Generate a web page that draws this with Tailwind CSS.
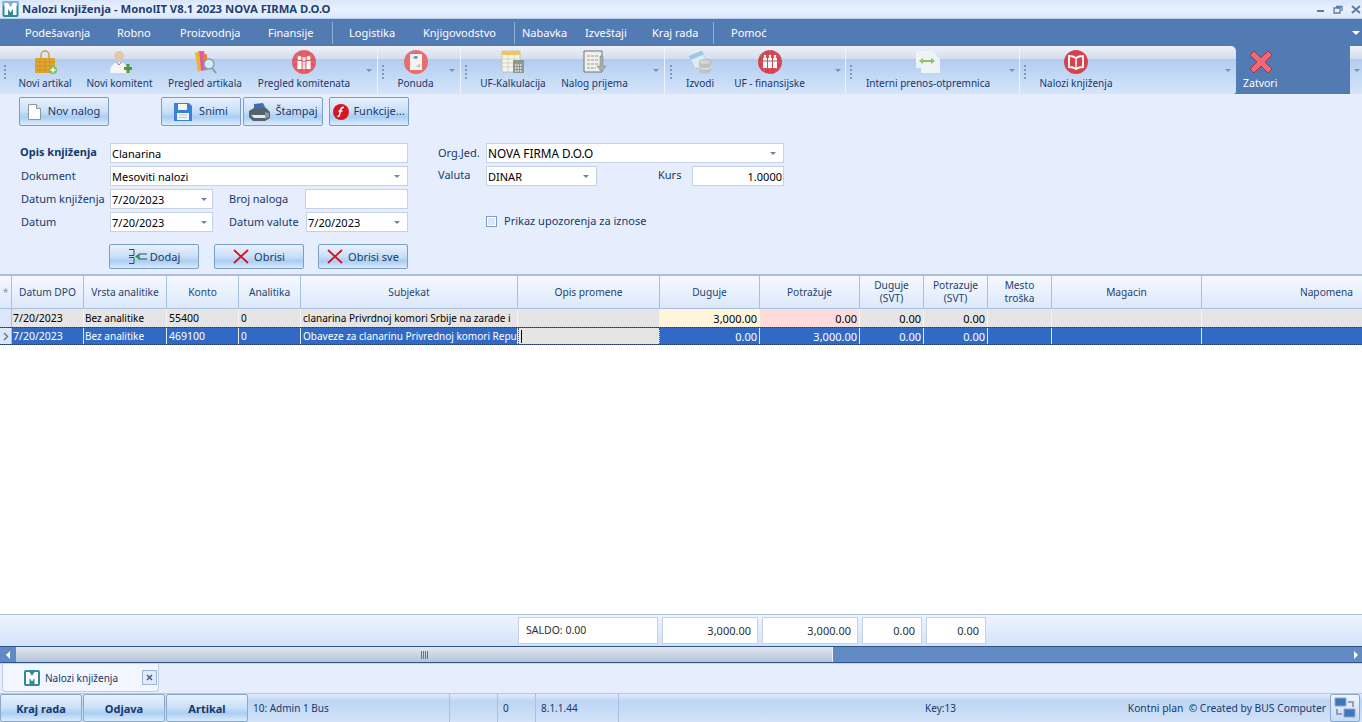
<!DOCTYPE html>
<html lang="en">
<head>
  <meta charset="UTF-8" />
  <title>Nalozi knjiženja</title>
  <script src="https://cdn.jsdelivr.net/npm/@tailwindcss/browser@4"></script>
</head>
<body class="bg-[#e6eefd]">
<div class="w-[1362px] h-[722px] overflow-hidden flex flex-col font-['Noto_Sans',sans-serif] text-[11px] leading-none text-[#15396b]">

  <!-- title bar -->
  <div class="h-[18px] shrink-0 flex items-center pl-[2px] bg-[linear-gradient(#d9e5fa,#e9f1fe_50%,#dce8fb)]">
    <svg width="17" height="16" viewBox="0 0 16 16"><rect width="16" height="16" rx="2" fill="#2f8a99"/><path d="M0 0h16v5H0z" fill="#7fb2d6"/><path d="M2 14V2h3.500L8 6l2.500-4H14v12h-3.500V8L8 11.500 5.500 8v6z" fill="#fff"/></svg>
    <span class="ml-[3px] font-bold text-[11.3px] text-[#1d3f73]">Nalozi knjiženja - MonolIT V8.1 2023 NOVA FIRMA D.O.O</span>
    <div class="ml-auto mr-[1px] flex items-center gap-[8px]">
      <svg width="8" height="8" viewBox="0 0 8 8"><rect y="5" width="7" height="2" fill="#5c7ba8"/></svg>
      <svg width="10" height="9" viewBox="0 0 10 9"><path d="M3 1.500h6v4.500M1 3h6v5H1z" fill="none" stroke="#5c7ba8" stroke-width="1.300"/></svg>
      <svg width="10" height="9" viewBox="0 0 10 9"><path d="M1 1l8 7M9 1L1 8" stroke="#5c7ba8" stroke-width="2"/></svg>
    </div>
  </div>

  <!-- menu -->
  <div class="h-[28px] shrink-0 flex items-center bg-[#527ab3] border-t border-[#b9cdea] text-white text-[11px]">
    <span class="ml-[25px] w-[92px]">Podešavanja</span>
    <span class="w-[63px]">Robno</span>
    <span class="w-[88px]">Proizvodnja</span>
    <span class="w-[64px]">Finansije</span>
    <span class="w-px h-[22px] bg-[#8fadd6]"></span>
    <span class="ml-[16px] w-[74px]">Logistika</span>
    <span class="w-[91px]">Knjigovodstvo</span>
    <span class="w-px h-[22px] bg-[#8fadd6]"></span>
    <span class="ml-[7px] w-[63px]">Nabavka</span>
    <span class="w-[67px]">Izveštaji</span>
    <span class="w-[61px]">Kraj rada</span>
    <span class="w-px h-[22px] bg-[#8fadd6]"></span>
    <span class="ml-[17px]">Pomoć</span>
    <span class="ml-auto mr-[2px] w-0 h-0 border-x-[4px] border-x-transparent border-t-[4px] border-t-white"></span>
  </div>

  <!-- toolbar -->
  <div class="h-[48px] shrink-0 flex bg-[#527ab3] text-[10px]">
    <!-- group 1 -->
    <div class="w-[378px] h-[48px] relative flex border-r border-[#eef3fb] bg-[linear-gradient(#eef1f7,#d4deee_26%,#b2cdf0_28%,#d6e5fb)]">
      <div class="w-[10px] flex items-center pl-[4px] pt-[3px]"><span class="w-[2px] h-[14px] border-l-2 border-dotted border-[#7f9ac2]"></span></div>
      <div class="w-[70px] flex flex-col items-center pt-[4px] gap-[4px]">
        <svg width="24" height="24" viewBox="0 0 24 24"><path d="M8 9V5a4 4 0 0 1 8 0v4" fill="none" stroke="#c9a24a" stroke-width="1.500"/><path d="M2 8h20v15H2z" fill="#e0a62e"/><path d="M2 12h20M2 16h20M2 20h20M7 8v15M12 8v15M17 8v15" stroke="#c48a1c" stroke-width=".6"/><circle cx="20" cy="20" r="4" fill="#7fbf5a"/><path d="M20 17.500v5M17.500 20h5" stroke="#fff" stroke-width="1.500"/></svg>
        <span>Novi artikal</span>
      </div>
      <div class="w-[79px] flex flex-col items-center pt-[4px] gap-[4px]">
        <svg width="24" height="24" viewBox="0 0 24 24"><circle cx="11" cy="6" r="5" fill="#e2c7ac"/><path d="M2 23c0-7 4-11 9-11s9 4 9 11z" fill="#f4f6f8"/><path d="M8.500 12l2.500 3 2.500-3" fill="none" stroke="#7a8794"/><path d="M16 17h8v3h-8z" fill="#4c9a3a"/><path d="M18.500 14h3v9h-3z" fill="#4c9a3a"/></svg>
        <span>Novi komitent</span>
      </div>
      <div class="w-[92px] flex flex-col items-center pt-[4px] gap-[4px]">
        <svg width="24" height="24" viewBox="0 0 24 24"><path d="M2 3l4-2 2 19-3 2z" fill="#e9b82f"/><path d="M6 1l5 0 1 19-4 1z" fill="#e05aa0"/><path d="M10 2l4 3 1 14-3 2z" fill="#ee7f3b"/><circle cx="16" cy="14" r="5" fill="#d6e9f3" stroke="#7e9db4" stroke-width="1.300"/><path d="M19 18l4 5" stroke="#7e9db4" stroke-width="2"/></svg>
        <span>Pregled artikala</span>
      </div>
      <div class="w-[106px] flex flex-col items-center pt-[4px] gap-[4px]">
        <svg width="24" height="24" viewBox="0 0 24 24"><circle cx="12" cy="12" r="12" fill="#de5b63"/><path d="M0 6h24M0 12h24M0 18h24M6 0v24M12 0v24M18 0v24" stroke="#fff" stroke-opacity=".18" stroke-width=".8"/><circle cx="7.500" cy="8" r="2" fill="#fff"/><circle cx="16.500" cy="8" r="2" fill="#fff"/><circle cx="12" cy="9" r="2" fill="#ffd9dc"/><path d="M5.500 11h4v8h-4zM14.500 11h4v8h-4z" fill="#fff"/><path d="M10.500 12h3v7h-3z" fill="#ffd9dc"/></svg>
        <span>Pregled komitenata</span>
      </div>
      <span class="absolute left-[366px] top-[23px] w-0 h-0 border-x-[3px] border-x-transparent border-t-[3px] border-t-[#7c92b4]"></span>
    </div>
    <!-- group 2 -->
    <div class="w-[83px] h-[48px] relative flex border-r border-[#eef3fb] bg-[linear-gradient(#eef1f7,#d4deee_26%,#b2cdf0_28%,#d6e5fb)]">
      <div class="w-[9px] flex items-center pl-[4px] pt-[3px]"><span class="w-[2px] h-[14px] border-l-2 border-dotted border-[#7f9ac2]"></span></div>
      <div class="w-[57px] flex flex-col items-center pt-[4px] gap-[4px]">
        <svg width="24" height="24" viewBox="0 0 24 24"><circle cx="12" cy="12" r="12" fill="#e66e70"/><path d="M6 4h12v16H6z" fill="#f7f1ee"/><path d="M9 8a3 3 0 0 1 5-1l-1.500 2z" fill="#4a9bd0"/><path d="M12 16l4-2v4z" fill="#c9c4c0"/></svg>
        <span>Ponuda</span>
      </div>
      <span class="absolute left-[71px] top-[23px] w-0 h-0 border-x-[3px] border-x-transparent border-t-[3px] border-t-[#7c92b4]"></span>
    </div>
    <!-- group 3 -->
    <div class="w-[204px] h-[48px] relative flex border-r border-[#eef3fb] bg-[linear-gradient(#eef1f7,#d4deee_26%,#b2cdf0_28%,#d6e5fb)]">
      <div class="w-[10px] flex items-center pl-[4px] pt-[3px]"><span class="w-[2px] h-[14px] border-l-2 border-dotted border-[#7f9ac2]"></span></div>
      <div class="w-[84px] flex flex-col items-center pt-[4px] gap-[4px]">
        <svg width="24" height="24" viewBox="0 0 24 24"><path d="M1 1h18v21H1z" fill="#f6f3e8" stroke="#b9b39c" stroke-width=".6"/><path d="M1 1h18v4H1z" fill="#eec65d"/><path d="M1 9h18M1 13h18M1 17h18M7 5v17M13 5v17" stroke="#c8c6b8" stroke-width=".7"/><rect x="12" y="10" width="11" height="13" fill="#8d9793"/><path d="M14 15h7M14 18h7M14 21h7" stroke="#e8ecec" stroke-width="1.300" stroke-dasharray="1.500 1"/></svg>
        <span>UF-Kalkulacija</span>
      </div>
      <div class="w-[79px] flex flex-col items-center pt-[4px] gap-[4px]">
        <svg width="24" height="24" viewBox="0 0 24 24"><path d="M1 1h18v21H1z" fill="#efefec" stroke="#6e7470"/><path d="M4 6h12M4 10h12M4 14h12M4 18h9" stroke="#979b96" stroke-dasharray="3 1"/><path d="M17 6h3v10h3l-4.500 6L14 16h3z" fill="#a9aeaa" stroke="#7e8480" stroke-width=".5"/></svg>
        <span>Nalog prijema</span>
      </div>
      <span class="absolute left-[192px] top-[23px] w-0 h-0 border-x-[3px] border-x-transparent border-t-[3px] border-t-[#7c92b4]"></span>
    </div>
    <!-- group 4 -->
    <div class="w-[181px] h-[48px] relative flex border-r border-[#eef3fb] bg-[linear-gradient(#eef1f7,#d4deee_26%,#b2cdf0_28%,#d6e5fb)]">
      <div class="w-[10px] flex items-center pl-[5px] pt-[3px]"><span class="w-[2px] h-[14px] border-l-2 border-dotted border-[#7f9ac2]"></span></div>
      <div class="w-[50px] flex flex-col items-center pt-[4px] gap-[4px]">
        <svg width="24" height="24" viewBox="0 0 24 24"><path d="M1 6l13-5 5 12-12 6z" fill="#dfeaf5" stroke="#b5c4d4" stroke-width=".6"/><path d="M1 6l13-5 1.500 3.500L2.500 10z" fill="#9cc8e8"/><ellipse cx="17" cy="12" rx="6" ry="2.500" fill="#d4d6d6" stroke="#9ea2a2" stroke-width=".5"/><path d="M11 12v9c0 1.500 2.500 2.500 6 2.500s6-1 6-2.500v-9c0 1.500-2.500 2.500-6 2.500s-6-1-6-2.500z" fill="#bfc3c3"/><path d="M11 16.500c0 1.500 2.500 2.500 6 2.500s6-1 6-2.500" fill="none" stroke="#eceeee"/></svg>
        <span>Izvodi</span>
      </div>
      <div class="w-[89px] flex flex-col items-center pt-[4px] gap-[4px]">
        <svg width="24" height="24" viewBox="0 0 24 24"><circle cx="12" cy="12" r="12" fill="#d6434f"/><path d="M0 6h24M0 12h24M0 18h24M6 0v24M12 0v24M18 0v24" stroke="#fff" stroke-opacity=".15" stroke-width=".8"/><path d="M5 8h4v10H5zM10 8h4v10h-4zM15 8h4v10h-4z" fill="#fff"/><path d="M5 11h14" stroke="#d6434f"/><path d="M7 5v3M12 5v3M17 5v3" stroke="#fff" stroke-width="2"/></svg>
        <span>UF - finansijske</span>
      </div>
      <span class="absolute left-[170px] top-[23px] w-0 h-0 border-x-[3px] border-x-transparent border-t-[3px] border-t-[#7c92b4]"></span>
    </div>
    <!-- group 5 -->
    <div class="w-[174px] h-[48px] relative flex border-r border-[#eef3fb] bg-[linear-gradient(#eef1f7,#d4deee_26%,#b2cdf0_28%,#d6e5fb)]">
      <div class="w-[10px] flex items-center pl-[4px] pt-[3px]"><span class="w-[2px] h-[14px] border-l-2 border-dotted border-[#7f9ac2]"></span></div>
      <div class="w-[144px] flex flex-col items-center pt-[4px] gap-[4px]">
        <svg width="24" height="24" viewBox="0 0 24 24"><path d="M0 1h16l8 8v14H5v-5H0z" fill="#eef3f8"/><path d="M3 11l4-3v2h8V8l4 3-4 3v-2H7v2z" fill="#8ec26a"/></svg>
        <span>Interni prenos-otpremnica</span>
      </div>
      <span class="absolute left-[163px] top-[23px] w-0 h-0 border-x-[3px] border-x-transparent border-t-[3px] border-t-[#7c92b4]"></span>
    </div>
    <!-- group 6 -->
    <div class="w-[216px] h-[48px] relative flex rounded-tr-[5px] rounded-br-[3px] bg-[linear-gradient(#eef1f7,#d4deee_26%,#b2cdf0_28%,#d6e5fb)]">
      <div class="w-[10px] flex items-center pl-[4px] pt-[3px]"><span class="w-[2px] h-[14px] border-l-2 border-dotted border-[#7f9ac2]"></span></div>
      <div class="w-[92px] flex flex-col items-center pt-[4px] gap-[4px]">
        <svg width="24" height="24" viewBox="0 0 24 24"><circle cx="12" cy="12" r="12" fill="#d6434f"/><path d="M12 8c-2-1.500-4-2-7-2v11c3 0 5 .5 7 2 2-1.500 4-2 7-2V6c-3 0-5 .5-7 2z" fill="#d6434f" stroke="#fff" stroke-width="1.800"/><path d="M12 8v11" stroke="#fff" stroke-width="1.500"/></svg>
        <span>Nalozi knjiženja</span>
      </div>
      <span class="absolute left-[205px] top-[23px] w-0 h-0 border-x-[3px] border-x-transparent border-t-[3px] border-t-[#7c92b4]"></span>
    </div>
    <!-- close -->
    <div class="w-[114px] h-[48px] flex flex-col pl-[7px] pt-[4px] gap-[4px] text-white text-[10.5px]">
      <svg class="ml-[6px]" width="24" height="24" viewBox="0 0 24 24"><path d="M5 1l7 7 7-7 4 4-7 7 7 7-4 4-7-7-7 7-4-4 7-7-7-7z" fill="#ef6a76" stroke="#b92c3b" stroke-width="1"/></svg>
      <span>Zatvori</span>
    </div>
    <div class="flex-1 h-[48px] relative bg-[linear-gradient(#eef1f7,#d4deee_26%,#b2cdf0_28%,#d6e5fb)]">
      <span class="absolute left-[4px] top-[23px] w-0 h-0 border-x-[3px] border-x-transparent border-t-[3px] border-t-[#7c92b4]"></span>
    </div>
  </div>

  <!-- form -->
  <div class="h-[180px] shrink-0 bg-[#e6eefd]">
    <div class="flex pl-[19px] pt-[3px] h-[32px]">
      <button class="w-[90px] h-[29px] flex items-center justify-center gap-[7px] border border-[#7c9dc5] rounded-[2px] bg-[linear-gradient(#e8f1fd,#c9dff7_50%,#a9cef4_70%,#dcebfb)]">
        <svg width="13" height="16" viewBox="0 0 13 16"><path d="M.5.500h8l4 4v11H.5z" fill="#fff" stroke="#8f969e"/><path d="M8.500.500v4h4" fill="#e4e7ea" stroke="#8f969e"/></svg>
        <span class="pb-[3px]">Nov nalog</span>
      </button>
      <button class="ml-[52px] w-[80px] h-[29px] flex items-center justify-center gap-[7px] border border-[#7c9dc5] rounded-[2px] bg-[linear-gradient(#e8f1fd,#c9dff7_50%,#a9cef4_70%,#dcebfb)]">
        <svg width="18" height="18" viewBox="0 0 18 18"><path d="M0 0h15l3 3v15H0z" fill="#3a82d9"/><path d="M4 1h9v6H4z" fill="#f4f6fa"/><path d="M3 10h12v7H3z" fill="#f2f4f8"/><path d="M5 12h8M5 14.500h8" stroke="#bcc6d4"/></svg>
        <span class="pb-[3px]">Snimi</span>
      </button>
      <button class="ml-[2px] w-[80px] h-[29px] flex items-center justify-center gap-[5px] border border-[#7c9dc5] rounded-[2px] bg-[linear-gradient(#e8f1fd,#c9dff7_50%,#a9cef4_70%,#dcebfb)]">
        <svg width="22" height="18" viewBox="0 0 22 18"><path d="M6 1l9-1 3 6H6z" fill="#3d6fb6"/><path d="M1 8l5-3h12l4 4v6l-5 3H5l-4-4z" fill="#56626e"/><path d="M3 12l3 3h11v-3z" fill="#e5e7ea"/><path d="M17 9l4 1v4l-4 2z" fill="#8b97a4"/></svg>
        <span class="pb-[3px]">Štampaj</span>
      </button>
      <button class="ml-[6px] w-[80px] h-[29px] flex items-center justify-center gap-[4px] border border-[#7c9dc5] rounded-[2px] bg-[linear-gradient(#e8f1fd,#c9dff7_50%,#a9cef4_70%,#dcebfb)]">
        <svg width="16" height="16" viewBox="0 0 16 16"><circle cx="8" cy="8" r="8" fill="#d7151f"/><path d="M11 3.500C9 3 8 4 7.500 6L6.500 11c-.2 1-1 1.500-2 1.200M5.500 7h4" fill="none" stroke="#fff" stroke-width="1.500"/></svg>
        <span class="pb-[3px]">Funkcije...</span>
      </button>
    </div>

    <div class="flex mt-[17px]">
      <!-- left column -->
      <div class="w-[408px] shrink-0">
        <div class="flex items-center h-[20px] pl-[20px]">
          <span class="w-[90px] pb-[3px] font-bold">Opis knjiženja</span>
          <div class="w-[298px] h-[20px] flex items-center pl-[1px] bg-white border border-[#c5d2e6] text-black">Clanarina</div>
        </div>
        <div class="flex items-center h-[20px] mt-[3px] pl-[21px]">
          <span class="w-[89px] pb-[2px]">Dokument</span>
          <div class="w-[298px] h-[20px] flex items-center justify-between pl-[1px] pr-[7px] bg-white border border-[#c5d2e6] text-black">Mesoviti nalozi<span class="w-0 h-0 border-x-[3px] border-x-transparent border-t-[3px] border-t-[#6c84a8]"></span></div>
        </div>
        <div class="flex items-center h-[20px] mt-[3px] pl-[21px]">
          <span class="w-[89px] pb-[2px] whitespace-nowrap">Datum knjiženja</span>
          <div class="w-[103px] h-[20px] flex items-center justify-between pl-[1px] pr-[5px] bg-white border border-[#c5d2e6] text-black">7/20/2023<span class="w-0 h-0 border-x-[3px] border-x-transparent border-t-[3px] border-t-[#6c84a8]"></span></div>
          <span class="ml-[16px] w-[76px] pb-[2px]">Broj naloga</span>
          <div class="w-[103px] h-[20px] bg-white border border-[#c5d2e6]"></div>
        </div>
        <div class="flex items-center h-[20px] mt-[3px] pl-[21px]">
          <span class="w-[89px] pb-[2px]">Datum</span>
          <div class="w-[103px] h-[20px] flex items-center justify-between pl-[1px] pr-[5px] bg-white border border-[#c5d2e6] text-black">7/20/2023<span class="w-0 h-0 border-x-[3px] border-x-transparent border-t-[3px] border-t-[#6c84a8]"></span></div>
          <span class="ml-[16px] w-[77px] pb-[2px]">Datum valute</span>
          <div class="w-[102px] h-[20px] flex items-center justify-between pl-[1px] pr-[7px] bg-white border border-[#c5d2e6] text-black">7/20/2023<span class="w-0 h-0 border-x-[3px] border-x-transparent border-t-[3px] border-t-[#6c84a8]"></span></div>
        </div>
        <div class="flex pl-[109px] mt-[12px]">
          <button class="w-[90px] h-[25px] pb-[1px] flex items-center justify-center gap-[3px] border border-[#7c9dc5] rounded-[2px] bg-[linear-gradient(#e8f1fd,#c9dff7_50%,#a9cef4_70%,#dcebfb)]">
            <svg width="19" height="15" viewBox="0 0 19 15"><path d="M1 .500h5v6H1M1 8.500h5v6H1M19 5h-8v5h8" fill="none" stroke="#234a80"/><path d="M7 7.500l4-3v6z" fill="#2f9a4a"/></svg>
            <span>Dodaj</span>
          </button>
          <button class="ml-[15px] w-[90px] h-[25px] pb-[1px] flex items-center justify-center gap-[5px] border border-[#7c9dc5] rounded-[2px] bg-[linear-gradient(#e8f1fd,#c9dff7_50%,#a9cef4_70%,#dcebfb)]">
            <svg width="16" height="15" viewBox="0 0 16 15"><path d="M1 1l14 13M15 1L1 14" stroke="#d4141c" stroke-width="1.800"/></svg>
            <span>Obrisi</span>
          </button>
          <button class="ml-[14px] w-[90px] h-[25px] pb-[1px] flex items-center justify-center gap-[5px] border border-[#7c9dc5] rounded-[2px] bg-[linear-gradient(#e8f1fd,#c9dff7_50%,#a9cef4_70%,#dcebfb)]">
            <svg width="16" height="15" viewBox="0 0 16 15"><path d="M1 1l14 13M15 1L1 14" stroke="#d4141c" stroke-width="1.800"/></svg>
            <span>Obrisi sve</span>
          </button>
        </div>
      </div>
      <!-- right column -->
      <div class="ml-[30px] w-[346px]">
        <div class="flex items-center h-[20px]">
          <span class="w-[48px] pb-[1px]">Org.Jed.</span>
          <div class="w-[298px] h-[20px] flex items-center justify-between pl-[1px] pr-[7px] bg-white border border-[#c5d2e6] text-black">
            <span class="pt-[2px] text-[11.8px]">NOVA FIRMA D.O.O</span><span class="w-0 h-0 border-x-[3px] border-x-transparent border-t-[3px] border-t-[#6c84a8]"></span>
          </div>
        </div>
        <div class="flex items-center h-[20px] mt-[3px]">
          <span class="w-[48px] pb-[3px]">Valuta</span>
          <div class="w-[111px] h-[20px] flex items-center justify-between pl-[1px] pr-[7px] bg-white border border-[#c5d2e6] text-black">DINAR<span class="w-0 h-0 border-x-[3px] border-x-transparent border-t-[3px] border-t-[#6c84a8]"></span></div>
          <span class="ml-[61px] w-[34px] pb-[3px]">Kurs</span>
          <div class="w-[92px] h-[20px] flex items-center justify-end pr-[1px] bg-white border border-[#c5d2e6] text-black">1.0000</div>
        </div>
        <div class="flex items-center mt-[29px] ml-[48px] gap-[7px]">
          <span class="w-[11px] h-[11px] border border-[#7c9dc5] bg-[#dbe7f8] shadow-[inset_0_0_0_1px_#fff]"></span>
          <span class="pb-[1px]">Prikaz upozorenja za iznose</span>
        </div>
      </div>
    </div>
  </div>

  <!-- grid -->
  <div class="h-[340px] shrink-0 bg-white overflow-hidden border-t-2 border-[#aebfd8] text-[10px]">
    <div class="w-[1511px]">
      <div class="h-[33px] grid grid-cols-[12px_72px_83px_72px_62px_217px_142px_100px_100px_64px_64px_64px_150px_249px] bg-[linear-gradient(#f5f9fe,#dce8fa)] border-b border-[#a9bfde] text-center text-[#1f4272] text-[10.2px]">
        <div class="flex items-center justify-center border-r border-[#a9bfde] text-[#7f9ac2]">*</div>
        <div class="flex items-center justify-center border-r border-[#a9bfde]">Datum DPO</div>
        <div class="flex items-center justify-center border-r border-[#a9bfde]">Vrsta analitike</div>
        <div class="flex items-center justify-center border-r border-[#a9bfde]">Konto</div>
        <div class="flex items-center justify-center border-r border-[#a9bfde]">Analitika</div>
        <div class="flex items-center justify-center border-r border-[#a9bfde]">Subjekat</div>
        <div class="flex items-center justify-center border-r border-[#a9bfde]">Opis promene</div>
        <div class="flex items-center justify-center border-r border-[#a9bfde]">Duguje</div>
        <div class="flex items-center justify-center border-r border-[#a9bfde]">Potražuje</div>
        <div class="flex items-center justify-center border-r border-[#a9bfde] leading-[13px]">Duguje<br />(SVT)</div>
        <div class="flex items-center justify-center border-r border-[#a9bfde] leading-[13px]">Potrazuje<br />(SVT)</div>
        <div class="flex items-center justify-center border-r border-[#a9bfde] leading-[13px]">Mesto<br />troška</div>
        <div class="flex items-center justify-center border-r border-[#a9bfde]">Magacin</div>
        <div class="flex items-center justify-center">Napomena</div>
      </div>
      <div class="h-[18px] grid grid-cols-[12px_72px_83px_72px_62px_217px_142px_100px_100px_64px_64px_64px_150px_249px] bg-[#e5e5e5] text-black">
        <div class="bg-[#dce8fa] border-r border-[#a9bfde]"></div>
        <div class="flex items-center pl-[1px] border-r border-[#f4f4f4] text-[10.5px]">7/20/2023</div>
        <div class="flex items-center pl-[1px] border-r border-[#f4f4f4]">Bez analitike</div>
        <div class="flex items-center pl-[2px] border-r border-[#f4f4f4] text-[10.5px]">55400</div>
        <div class="flex items-center pl-[2px] border-r border-[#f4f4f4]">0</div>
        <div class="flex items-center pl-[2px] border-r border-[#f4f4f4] whitespace-nowrap">clanarina Privrdnoj komori Srbije na zarade i</div>
        <div class="border-r border-[#f4f4f4]"></div>
        <div class="flex items-center justify-end pr-[2px] bg-[#fff5dc] border-r border-[#f4f4f4] text-[11px]">3,000.00</div>
        <div class="flex items-center justify-end pr-[2px] bg-[#ffdcdc] border-r border-[#f4f4f4] text-[11px]">0.00</div>
        <div class="flex items-center justify-end pr-[2px] border-r border-[#f4f4f4] text-[11px]">0.00</div>
        <div class="flex items-center justify-end pr-[2px] border-r border-[#f4f4f4] text-[11px]">0.00</div>
        <div class="border-r border-[#f4f4f4]"></div>
        <div class="border-r border-[#f4f4f4]"></div>
        <div></div>
      </div>
      <div class="h-[18px] grid grid-cols-[12px_72px_83px_72px_62px_217px_142px_100px_100px_64px_64px_64px_150px_249px] bg-[#316ac5] border-y border-dotted border-[#1d3a6e] text-white">
        <div class="flex items-center justify-center bg-[#dce8fa] border-r border-[#a9bfde]"><svg width="6" height="9" viewBox="0 0 6 9"><path d="M1 1l3.500 3.500L1 8" fill="none" stroke="#5f7fa8" stroke-width="1.500"/></svg></div>
        <div class="flex items-center pl-[1px] border-r border-[#e5e5e5] text-[10.5px]">7/20/2023</div>
        <div class="flex items-center pl-[1px] border-r border-[#e5e5e5]">Bez analitike</div>
        <div class="flex items-center pl-[2px] border-r border-[#e5e5e5] text-[10.5px]">469100</div>
        <div class="flex items-center pl-[2px] border-r border-[#e5e5e5]">0</div>
        <div class="flex items-center pl-[2px] border-r border-[#e5e5e5] whitespace-nowrap overflow-hidden">Obaveze za clanarinu Privrednoj komori Repu</div>
        <div class="flex items-center pl-[2px] bg-[#e5e5e5] border-x border-dotted border-[#444]"><span class="w-px h-[13px] bg-black"></span></div>
        <div class="flex items-center justify-end pr-[2px] border-r border-[#e5e5e5] text-[11px]">0.00</div>
        <div class="flex items-center justify-end pr-[2px] border-r border-[#e5e5e5] text-[11px]">3,000.00</div>
        <div class="flex items-center justify-end pr-[2px] border-r border-[#e5e5e5] text-[11px]">0.00</div>
        <div class="flex items-center justify-end pr-[2px] border-r border-[#e5e5e5] text-[11px]">0.00</div>
        <div class="border-r border-[#e5e5e5]"></div>
        <div class="border-r border-[#e5e5e5]"></div>
        <div></div>
      </div>
    </div>
  </div>

  <!-- totals -->
  <div class="h-[32px] shrink-0 flex items-center pl-[518px] gap-[4px] border-t border-[#aebfd8] bg-[linear-gradient(#eef4fe,#d3e3f9)] text-[#2a2f38]">
    <div class="w-[140px] h-[27px] flex items-center pl-[7px] bg-white border border-[#c5d2e6] text-[10.5px]">SALDO: 0.00</div>
    <div class="w-[96px] h-[27px] flex items-center justify-end pr-[6px] bg-white border border-[#c5d2e6]">3,000.00</div>
    <div class="w-[96px] h-[27px] flex items-center justify-end pr-[6px] bg-white border border-[#c5d2e6]">3,000.00</div>
    <div class="w-[60px] h-[27px] flex items-center justify-end pr-[6px] bg-white border border-[#c5d2e6]">0.00</div>
    <div class="w-[60px] h-[27px] flex items-center justify-end pr-[6px] bg-white border border-[#c5d2e6]">0.00</div>
  </div>

  <!-- horizontal scrollbar -->
  <div class="h-[17px] shrink-0 flex border-y border-[#2f5488] bg-[#628ac4]">
    <div class="w-[16px] flex items-center justify-center"><span class="w-0 h-0 border-y-[4px] border-y-transparent border-r-[4px] border-r-white"></span></div>
    <div class="w-[817px] flex items-center justify-center bg-[linear-gradient(#e2e7ee,#b3c3d9)] border-r border-[#eef3fb]">
      <span class="w-[7px] h-[8px] bg-[repeating-linear-gradient(90deg,#5d7698_0,#5d7698_1px,transparent_1px,transparent_2px)]"></span>
    </div>
    <div class="flex-1 flex items-center justify-end pr-[4px]"><span class="w-0 h-0 border-y-[4px] border-y-transparent border-l-[4px] border-l-white"></span></div>
  </div>

  <!-- tabs -->
  <div class="h-[30px] shrink-0 flex pl-[2px] border-t border-[#c3d3ea] bg-[#e6eefd]">
    <div class="w-[157px] h-[28px] flex items-center pl-[21px] border-x border-b border-[#bccde6] rounded-b-[4px] bg-[#f2f6fe] text-[10px]">
      <svg width="16" height="16" viewBox="0 0 16 16"><rect width="16" height="16" rx="2" fill="#2f8a99"/><path d="M2 14V2h3.500L8 6l2.500-4H14v12h-3.500V8L8 11.500 5.500 8v6z" fill="#fff"/></svg>
      <span class="ml-[5px]">Nalozi knjiženja</span>
      <span class="ml-auto mr-[1px] w-[15px] h-[15px] flex items-center justify-center border border-[#9db4d4] bg-[#e0eafa]">
        <svg width="7" height="7" viewBox="0 0 7 7"><path d="M1 1l5 5M6 1L1 6" stroke="#35598c" stroke-width="1.400"/></svg>
      </span>
    </div>
  </div>

  <!-- status bar -->
  <div class="h-[29px] shrink-0 flex items-stretch border-t border-[#b5c7e0] bg-[linear-gradient(#e3ecfb,#bcd5f4_25%,#d4e3f9)] text-[10px]">
    <button class="w-[82px] flex items-center justify-center font-bold text-[11px] border border-[#8aa8cc] rounded-[2px] bg-[linear-gradient(#e8f1fd,#c9dff7_50%,#a9cef4_70%,#dcebfb)]">Kraj rada</button>
    <button class="ml-[1px] w-[82px] flex items-center justify-center font-bold text-[11px] border border-[#8aa8cc] rounded-[2px] bg-[linear-gradient(#e8f1fd,#c9dff7_50%,#a9cef4_70%,#dcebfb)]">Odjava</button>
    <button class="ml-[1px] w-[82px] flex items-center justify-center font-bold text-[11px] border border-[#8aa8cc] rounded-[2px] bg-[linear-gradient(#e8f1fd,#c9dff7_50%,#a9cef4_70%,#dcebfb)]">Artikal</button>
    <div class="w-[202px] flex items-center pl-[5px] border-r border-[#a9bfde]">10: Admin 1 Bus</div>
    <div class="w-[48px] border-r border-[#a9bfde]"></div>
    <div class="w-[38px] flex items-center pl-[5px] border-r border-[#a9bfde]">0</div>
    <div class="w-[83px] flex items-center pl-[5px] border-r border-[#a9bfde]">8.1.1.44</div>
    <div class="w-[306px] flex items-center pl-[306px] whitespace-nowrap">Key:13</div>
    <div class="flex-1 flex items-center justify-end pr-[2px] whitespace-nowrap">
      <span class="text-[10.3px]">Kontni plan &nbsp;© Created by BUS Computer</span>
      <span class="ml-[4px] w-[30px] h-[28px] flex items-center justify-center border border-[#8aa8cc] rounded-[2px] bg-[linear-gradient(#eef4fd,#c6dbf6)]">
        <svg width="22" height="22" viewBox="0 0 22 22"><path d="M1 1h11v8H1z" fill="#3d76c4" stroke="#9aa6b4"/><path d="M10 12h11v8H10z" fill="#3d76c4" stroke="#9aa6b4"/><path d="M14 5h5v5M8 17H3v-5" fill="none" stroke="#7a8a9c" stroke-width="1.500"/></svg>
      </span>
    </div>
  </div>
</div>
</body>
</html>
